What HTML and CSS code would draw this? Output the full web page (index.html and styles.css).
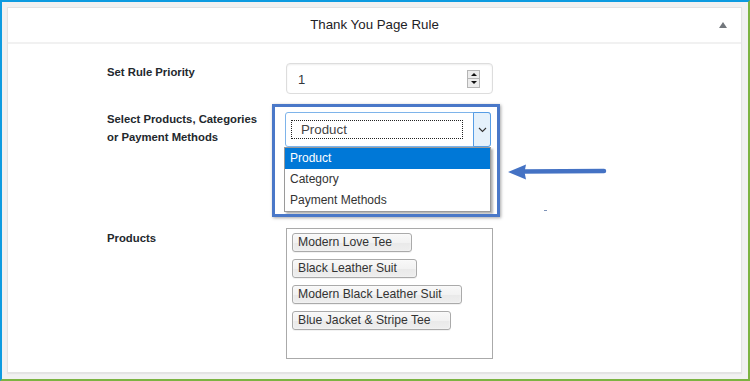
FILE: index.html
```html
<!DOCTYPE html>
<html lang="en">
<head>
<meta charset="utf-8">
<title>Thank You Page Rule</title>
<link rel="stylesheet" href="styles.css">
</head>
<body>
<div class="frame">
  <div class="card">
    <div class="card-head">
      <span class="head-spacer"></span>
      <h2 class="title">Thank You Page Rule</h2>
      <span class="toggle-wrap"><span class="toggle"></span></span>
    </div>
    <div class="card-body">
      <div class="row row-priority">
        <div class="label">Set Rule Priority</div>
        <div class="field">
          <div class="num-input">
            <span class="num-val">1</span>
            <span class="spinner">
              <span class="spin spin-up"><span class="tri tri-up"></span></span>
              <span class="spin spin-down"><span class="tri tri-down"></span></span>
            </span>
          </div>
        </div>
      </div>
      <div class="row row-type">
        <div class="label">Select Products, Categories<br>or Payment Methods</div>
        <div class="field field-type">
          <div class="select">
            <div class="select-text"><span class="focus-box">Product</span></div>
            <div class="select-btn">
              <svg width="9" height="6" viewBox="0 0 9 6"><polyline points="1,1 4.5,4.5 8,1" fill="none" stroke="#333" stroke-width="1.1"/></svg>
            </div>
          </div>
          <ul class="options">
            <li class="option option-active">Product</li>
            <li class="option">Category</li>
            <li class="option">Payment Methods</li>
          </ul>
          <div class="highlight"></div>
          <svg class="pointer" width="102" height="22" viewBox="0 0 102 22">
            <line x1="16" y1="10.5" x2="97" y2="10" stroke="#4472c4" stroke-width="4.5" stroke-linecap="round"/>
            <polygon points="1,11 19,3.5 17.5,11 19,18.5" fill="#4472c4"/>
          </svg>
          <span class="stray"></span>
        </div>
      </div>
      <div class="row row-products">
        <div class="label">Products</div>
        <div class="field">
          <div class="tag-box">
            <span class="tag">Modern Love Tee</span>
            <span class="tag">Black Leather Suit</span>
            <span class="tag">Modern Black Leather Suit</span>
            <span class="tag">Blue Jacket &amp; Stripe Tee</span>
          </div>
        </div>
      </div>
    </div>
  </div>
</div>
</body>
</html>
```
FILE: styles.css
```css
* { box-sizing: border-box; }
html, body { margin: 0; padding: 0; }
body {
  font-family: "Liberation Sans", Arial, sans-serif;
  color: #23282d;
  background: #f1f1f1;
}
.frame {
  width: 750px;
  height: 381px;
  display: flex;
  flex-direction: column;
  background: #f1f1f1;
  border-top: 2px solid #0d9be0;
  border-left: 2px solid #0d9be0;
  border-right: 2px solid #7cb342;
  border-bottom: 2px solid #7cb342;
  padding: 5px 6px 6px 5px;
}
.card {
  flex: 1;
  background: #fff;
  border: 1px solid #e3e3e3;
  box-shadow: 0 1px 1px rgba(0,0,0,.05);
  overflow: hidden;
}
.card-head {
  height: 36px;
  border-bottom: 2px solid #f1f1f1;
  display: grid;
  grid-template-columns: 1fr auto 1fr;
  align-items: center;
}
.title {
  margin: 0;
  font-size: 13.3px;
  font-weight: normal;
  color: #1d2125;
  padding-bottom: 1px;
}
.toggle-wrap {
  justify-self: end;
  padding-right: 14px;
  display: flex;
}
.toggle {
  width: 0; height: 0;
  border-left: 4px solid transparent;
  border-right: 4px solid transparent;
  border-bottom: 6px solid #72777c;
}
.card-body {
  padding: 19px 0 0 99px;
}
.row {
  display: grid;
  grid-template-columns: 179px 207px;
}
.label {
  font-size: 11.3px;
  font-weight: bold;
  line-height: 18px;
  color: #23282d;
}
.row-priority { margin-bottom: 18px; }
.row-type { margin-bottom: 18px; }
.row-type .label { margin-top: -2px; }
.row-products .label { margin-top: 1px; }

.num-input {
  height: 31px;
  border: 1px solid #ddd;
  border-radius: 4px;
  box-shadow: inset 0 1px 2px rgba(0,0,0,.07);
  display: flex;
  align-items: center;
  justify-content: space-between;
  padding: 0 12px 0 11px;
}
.num-val { font-size: 13px; color: #32373c; padding-top: 2px; }
.spinner {
  width: 13px;
  height: 18px;
  display: flex;
  flex-direction: column;
  border: 1px solid #b5b5b5;
  background: #ececec;
}
.spin {
  flex: 1;
  display: flex;
  align-items: center;
  justify-content: center;
}
.spin-up { border-bottom: 1px solid #b5b5b5; }
.tri { width: 0; height: 0; border-left: 3px solid transparent; border-right: 3px solid transparent; }
.tri-up { border-bottom: 3px solid #111; }
.tri-down { border-top: 3px solid #111; }

.field-type {
  position: relative;
  height: 98px;
}
.select {
  margin-left: -1px;
  width: 206px;
  height: 35px;
  border: 1px solid #7eb4ea;
  border-radius: 3px;
  display: flex;
  background: #fff;
}
.select-text {
  flex: 1;
  display: flex;
  align-items: center;
  padding: 0 10px 0 5px;
}
.focus-box {
  flex: 1;
  height: 19px;
  border: 1px dotted #222;
  font-size: 13.3px;
  line-height: 17px;
  color: #444;
  padding-left: 9px;
}
.select-btn {
  width: 18px;
  margin: -1px -1px -1px 0;
  border: 1px solid #569de5;
  border-radius: 0 3px 3px 0;
  background: #e5f1fb;
  display: flex;
  align-items: center;
  justify-content: center;
}
.options {
  position: absolute;
  left: -2px;
  top: 35px;
  width: 207px;
  margin: 0;
  padding: 0;
  list-style: none;
  background: #fff;
  border: 1px solid #9a9a9a;
  box-shadow: 2px 2px 2px rgba(0,0,0,.3);
  z-index: 2;
}
.option {
  height: 21px;
  line-height: 21px;
  padding-left: 5px;
  font-size: 12px;
  color: #333;
}
.option-active {
  background: #0078d7;
  color: #fff;
}
.highlight {
  position: absolute;
  left: -14px;
  top: -8px;
  width: 228px;
  height: 113px;
  border: 3px solid #4a78c8;
  box-shadow: 1px 1px 3px rgba(0,0,0,.35), inset 0 0 1px rgba(255,255,255,.6);
  pointer-events: none;
  z-index: 3;
}
.pointer {
  position: absolute;
  left: 221px;
  top: 49px;
}
.stray {
  position: absolute;
  left: 258px;
  top: 98px;
  width: 3px;
  height: 1px;
  background: #7d93b8;
}

.tag-box {
  height: 131px;
  border: 1px solid #aaa;
  padding: 4px 5px;
  display: flex;
  flex-direction: column;
  align-items: flex-start;
  gap: 7px;
}
.tag {
  height: 19px;
  line-height: 17px;
  border: 1px solid #aaa;
  border-radius: 3px;
  padding: 0 19px 0 5px;
  font-size: 12.2px;
  color: #333;
  background: linear-gradient(#f8f8f8 0%, #f2f2f2 50%, #e9e9e9 52%, #eee 100%);
  box-shadow: inset 0 0 2px #fff, 0 1px 0 rgba(0,0,0,.05);
}
```
